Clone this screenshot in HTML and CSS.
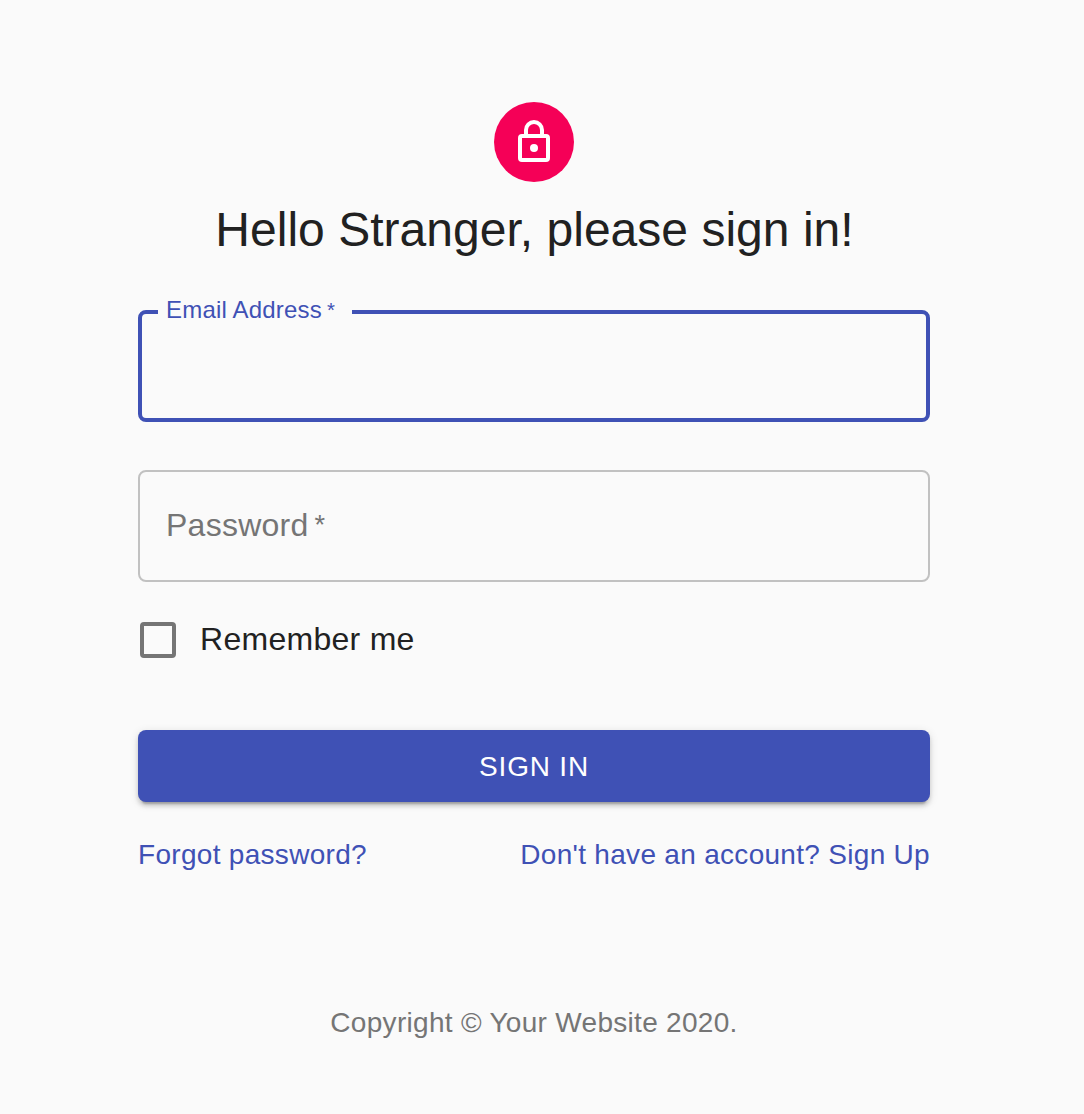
FILE: index.html
```html
<!DOCTYPE html>
<html lang="en">
<head>
<meta charset="utf-8">
<title>Sign in</title>
<link rel="stylesheet" href="styles.css">
</head>
<body>
<main class="container">
  <div class="avatar">
    <svg class="avatar-icon" viewBox="0 0 48 48" aria-hidden="true">
      <rect x="10" y="18" width="28" height="24" rx="2"/>
      <path d="M16 18v-6a8 8 0 0 1 16 0v6"/>
      <circle class="keyhole" cx="24" cy="30" r="4"/>
    </svg>
  </div>
  <h1 class="title">Hello Stranger, please sign in!</h1>
  <form class="form">
    <fieldset class="field field-focused"><legend class="legend">Email Address<span class="star">*</span></legend></fieldset>
    <div class="field field-idle">Password<span class="star">*</span></div>
    <label class="remember"><span class="checkbox"></span><span class="remember-text">Remember me</span></label>
    <button class="submit" type="button">SIGN IN</button>
    <nav class="links"><a>Forgot password?</a><a class="signup">Don't have an account? Sign Up</a></nav>
  </form>
  <footer class="footer">Copyright © Your Website 2020.</footer>
</main>
</body>
</html>
```

FILE: styles.css
```css
* { box-sizing: border-box; }
body { margin: 0; background: #fafafa; color: #212121; font-family: "Liberation Sans", Arial, sans-serif; white-space: nowrap; }
.container { width: 792px; margin-left: 138px; padding-top: 102px; display: flex; flex-direction: column; align-items: center; }
.avatar { width: 80px; height: 80px; border-radius: 50%; background: #f50057; display: flex; align-items: center; justify-content: center; }
.avatar-icon { width: 48px; height: 48px; fill: none; stroke: #fff; stroke-width: 4; }
.keyhole { fill: #fff; stroke: none; }
.title { margin: 16px 0 0; padding-left: 1px; height: 64px; line-height: 64px; font-size: 48px; font-weight: 400; letter-spacing: .02px; }
.form { width: 100%; display: flex; flex-direction: column; }
.field { width: 100%; margin: 0; border-radius: 8px; }
.field-focused { height: 124px; margin-top: 36px; padding: 0 16px; border: 4px solid #3f51b5; }
.legend { height: 28px; line-height: 24px; padding: 0 8px; width: 194px; font-size: 24px; letter-spacing: .2px; color: #3f51b5; }
.star { margin-left: 5px; font-size: .85em; line-height: 1; vertical-align: 1px; }
.field-idle { height: 112px; margin-top: 48px; padding: 0 26px; border: 2px solid #c1c1c1; font-size: 32px; line-height: 106px; letter-spacing: .25px; color: #757575; }
.field-idle .star { margin-left: 6px; vertical-align: 2px; }
.remember { margin-top: 40px; display: flex; align-items: center; gap: 24px; height: 36px; padding-left: 2px; font-size: 32px; letter-spacing: .28px; }
.remember-text { padding-bottom: 2px; }
.checkbox { width: 36px; height: 36px; border: 4px solid #757575; border-radius: 4px; }
.submit { margin-top: 72px; height: 72px; padding: 2px 0 0; border: 0; border-radius: 8px; background: #3f51b5; color: #fff; font-family: inherit; font-size: 28px; letter-spacing: .8px; box-shadow: 0 6px 2px -4px rgba(0,0,0,.2), 0 4px 4px rgba(0,0,0,.14), 0 2px 10px rgba(0,0,0,.12); }
.links { margin-top: 33px; display: flex; justify-content: space-between; height: 40px; line-height: 40px; font-size: 28px; letter-spacing: .3px; color: #3f51b5; }
.footer { margin-top: 128px; height: 40px; line-height: 40px; font-size: 28px; letter-spacing: .3px; color: #757575; }
```
